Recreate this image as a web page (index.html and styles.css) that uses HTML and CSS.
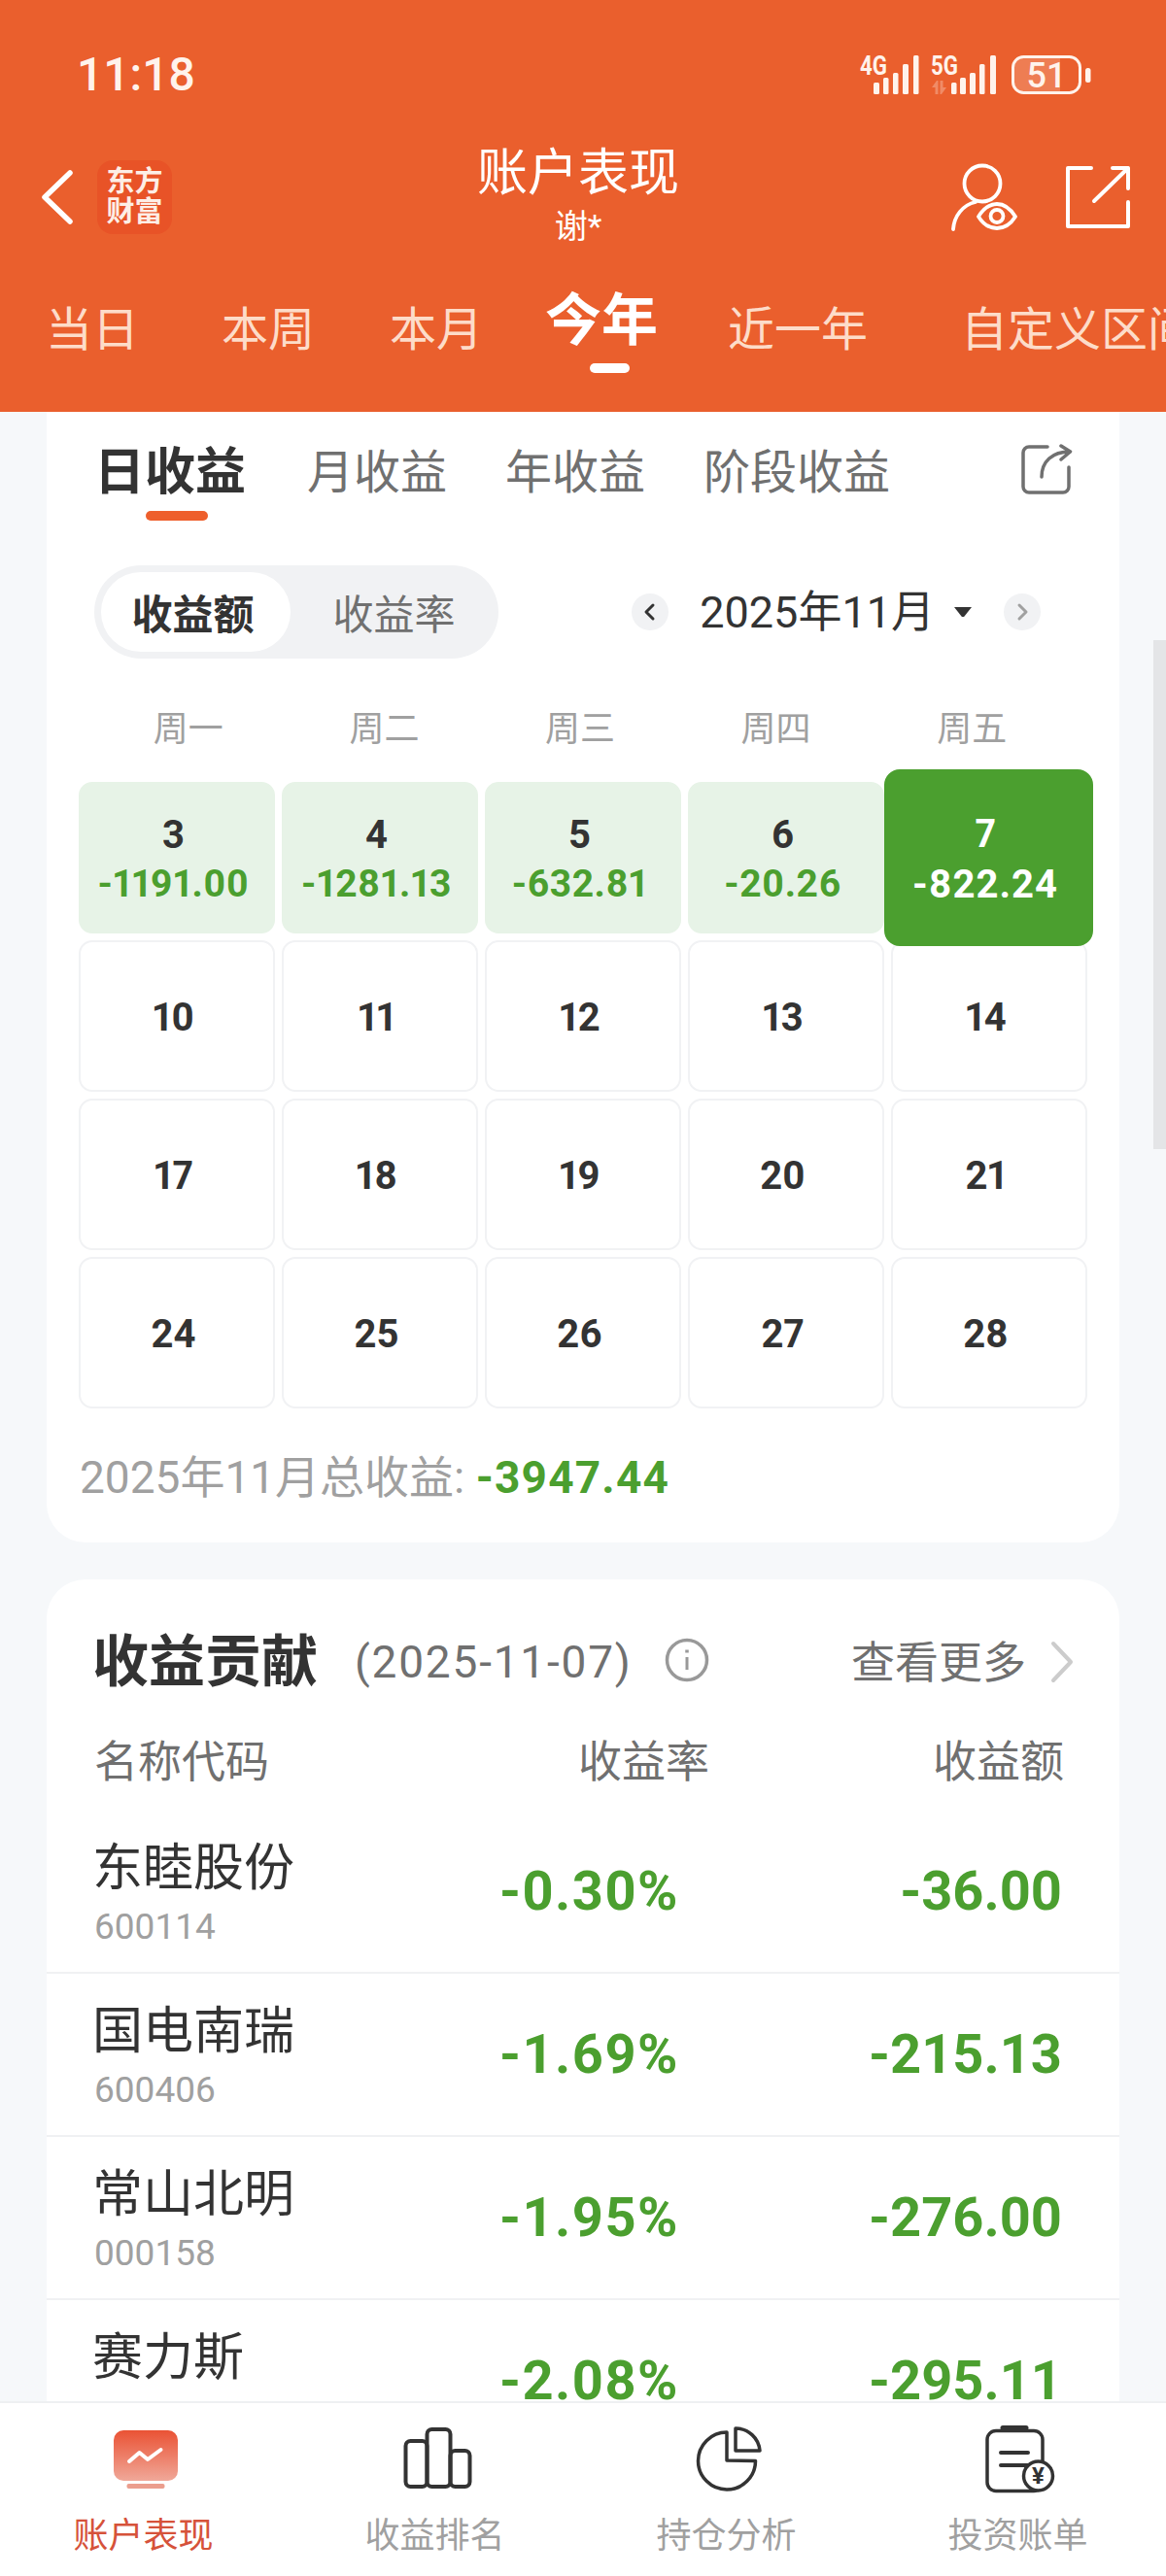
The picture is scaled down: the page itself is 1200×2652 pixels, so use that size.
FILE: index.html
```html
<!DOCTYPE html>
<html lang="zh-CN">
<head>
<meta charset="utf-8">
<title>账户表现</title>
<link rel="stylesheet" href="styles.css">
</head>
<body>
<div class="page">
  <header class="header">
    <div class="status">
      <span class="time">11:18</span>
      <svg class="status-icons" width="240" height="60" viewBox="885 45 240 60">
        <g fill="#fff3ec">
          <text class="net" x="885" y="77" textLength="28" lengthAdjust="spacingAndGlyphs">4G</text>
          <rect x="899" y="85" width="6" height="12" rx="1.5"/>
          <rect x="909" y="80" width="5.5" height="17" rx="1.5"/>
          <rect x="919" y="75" width="5.5" height="22" rx="1.5"/>
          <rect x="929" y="66" width="6" height="31" rx="1.5"/>
          <rect x="940" y="57" width="5.5" height="40" rx="1.5"/>
          <text class="net" x="958" y="77" textLength="28" lengthAdjust="spacingAndGlyphs">5G</text>
          <path d="M964 83l-5 7h3.500v7h3V83zM969 97l5-7h-3.500v-7h-3v14z" opacity=".3"/>
          <rect x="979" y="85" width="5.5" height="12" rx="1.5"/>
          <rect x="988" y="80" width="6" height="17" rx="1.5"/>
          <rect x="998" y="75" width="6" height="22" rx="1.5"/>
          <rect x="1008" y="66" width="5.5" height="31" rx="1.5"/>
          <rect x="1019" y="57" width="6" height="40" rx="1.5"/>
          <path d="M1043 70a11 11 0 0 1 11-11h37v36h-37a11 11 0 0 1-11-11z" opacity=".2"/>
          <rect x="1042.5" y="58.5" width="69" height="37" rx="11" fill="none" stroke="#fff3ec" stroke-width="3"/>
          <text class="batt" x="1077" y="90" text-anchor="middle">51</text>
          <rect x="1117" y="70" width="5.5" height="15" rx="2.5"/>
        </g>
      </svg>
    </div>
    <div class="titlebar">
      <div class="title-left">
        <svg class="back" width="38" height="60" viewBox="40 173 38 60" fill="none" stroke="#fff" stroke-width="5.5" stroke-linecap="round" stroke-linejoin="round">
          <path d="M72 178L46 203l26 25"/>
        </svg>
        <div class="logo">东方<br>财富</div>
      </div>
      <div class="title-center">
        <div class="title">账户表现</div>
        <div class="subtitle">谢*</div>
      </div>
      <div class="title-right">
        <svg width="70" height="70" viewBox="979 167 70 70" fill="none" stroke="#fff" stroke-width="3.8" stroke-linecap="round" stroke-linejoin="round">
          <circle cx="1011" cy="188" r="18.5"/>
          <path d="M981 235c1-14 10-25 23-28"/>
          <path d="M1007 222c5-8 12-13 19-13s14 5 19 13c-5 8-12 12-19 12s-14-4-19-12z"/>
          <circle cx="1026" cy="221.5" r="6.5"/>
        </svg>
        <svg width="69" height="68" viewBox="1096 168 69 68" fill="none" stroke="#fff" stroke-width="4" stroke-linecap="round" stroke-linejoin="round">
          <path d="M1123 172h-24v60h62v-25"/>
          <path d="M1126 206l35-34M1145 172h16v21"/>
        </svg>
      </div>
    </div>
    <nav class="ranges">
      <span class="range">当日</span>
      <span class="range">本周</span>
      <span class="range">本月</span>
      <span class="range range-active">今年<i class="range-bar"></i></span>
      <span class="range">近一年</span>
      <span class="range">自定义区间</span>
    </nav>
  </header>

  <main class="content">
    <section class="card card-cal">
      <div class="kinds">
        <span class="kind kind-active">日收益<i class="kind-bar"></i></span>
        <span class="kind">月收益</span>
        <span class="kind">年收益</span>
        <span class="kind">阶段收益</span>
        <svg class="kind-share" width="54" height="54" viewBox="1050 457 54 54" fill="none" stroke="#707070" stroke-width="3.5" stroke-linecap="round" stroke-linejoin="round">
          <path d="M1078 460h-19a6 6 0 0 0-6 6v35a6 6 0 0 0 6 6h35a6 6 0 0 0 6-6v-20"/>
          <path d="M1072 491c0-16 11-26 29-26M1092 459l9.500 6-9.500 8"/>
        </svg>
      </div>
      <div class="toolbar">
        <div class="segment">
          <span class="seg seg-active">收益额</span>
          <span class="seg">收益率</span>
        </div>
        <div class="month">
          <svg width="38" height="38" viewBox="0 0 38 38"><circle cx="19" cy="19" r="19" fill="#f1f2f4"/><path d="M22 12l-7 7 7 7" fill="none" stroke="#333" stroke-width="3" stroke-linecap="round" stroke-linejoin="round"/></svg>
          <span class="month-label">2025年11月</span>
          <svg class="caret" width="18" height="10" viewBox="0 0 18 10"><path d="M0 0h18l-7.500 9.500a2 2 0 0 1-3 0z" fill="#333"/></svg>
          <svg class="month-next" width="38" height="38" viewBox="0 0 38 38"><circle cx="19" cy="19" r="19" fill="#f1f2f4"/><path d="M16 12l7 7-7 7" fill="none" stroke="#a0a0a0" stroke-width="3" stroke-linecap="round" stroke-linejoin="round"/></svg>
        </div>
      </div>
      <div class="weekdays">
        <span>周一</span><span>周二</span><span>周三</span><span>周四</span><span>周五</span>
      </div>
      <div class="calendar">
        <div class="day day-loss"><b class="num">3</b><span class="amt">-1191.00</span></div>
        <div class="day day-loss"><b class="num">4</b><span class="amt">-1281.13</span></div>
        <div class="day day-loss"><b class="num">5</b><span class="amt">-632.81</span></div>
        <div class="day day-loss"><b class="num">6</b><span class="amt">-20.26</span></div>
        <div class="day day-selected"><b class="num">7</b><span class="amt">-822.24</span></div>
        <div class="day"><b class="num">10</b></div>
        <div class="day"><b class="num">11</b></div>
        <div class="day"><b class="num">12</b></div>
        <div class="day"><b class="num">13</b></div>
        <div class="day"><b class="num">14</b></div>
        <div class="day"><b class="num">17</b></div>
        <div class="day"><b class="num">18</b></div>
        <div class="day"><b class="num">19</b></div>
        <div class="day"><b class="num">20</b></div>
        <div class="day"><b class="num">21</b></div>
        <div class="day"><b class="num">24</b></div>
        <div class="day"><b class="num">25</b></div>
        <div class="day"><b class="num">26</b></div>
        <div class="day"><b class="num">27</b></div>
        <div class="day"><b class="num">28</b></div>
      </div>
      <div class="total">2025年11月总收益: <b class="total-value">-3947.44</b></div>
    </section>

    <section class="card card-contrib">
      <div class="contrib-head">
        <h2 class="contrib-title">收益贡献</h2>
        <span class="contrib-date">(2025-11-07)</span>
        <svg class="info" width="46" height="46" viewBox="0 0 46 46" fill="none" stroke="#999" stroke-width="3.500">
          <circle cx="23" cy="23" r="20.500"/>
          <path d="M23 20v13" stroke-width="3"/>
          <path d="M23 12.500v3" stroke-width="3.500"/>
        </svg>
        <span class="more">查看更多</span>
        <svg class="more-arrow" width="26" height="46" viewBox="0 0 26 46" fill="none" stroke="#ccc" stroke-width="4" stroke-linecap="round" stroke-linejoin="round">
          <path d="M4 4l18 19L4 42"/>
        </svg>
      </div>
      <div class="cols">
        <span>名称代码</span><span class="col-r">收益率</span><span class="col-r">收益额</span>
      </div>
      <div class="row">
        <div class="stock"><div class="stock-name">东睦股份</div><div class="stock-code">600114</div></div>
        <div class="rate">-0.30%</div><div class="profit">-36.00</div>
      </div>
      <div class="row">
        <div class="stock"><div class="stock-name">国电南瑞</div><div class="stock-code">600406</div></div>
        <div class="rate">-1.69%</div><div class="profit">-215.13</div>
      </div>
      <div class="row">
        <div class="stock"><div class="stock-name">常山北明</div><div class="stock-code">000158</div></div>
        <div class="rate">-1.95%</div><div class="profit">-276.00</div>
      </div>
      <div class="row row-cut">
        <div class="stock"><div class="stock-name">赛力斯</div></div>
        <div class="rate">-2.08%</div><div class="profit">-295.11</div>
      </div>
    </section>
  </main>

  <div class="scrollbar"></div>

  <footer class="tabbar">
    <div class="tab tab-active">
      <svg width="72" height="72" viewBox="0 0 72 72">
        <defs><linearGradient id="tabGrad" x1="0" y1="0" x2="0" y2="1"><stop offset="0" stop-color="#ea5234"/><stop offset="1" stop-color="#f0a899"/></linearGradient></defs>
        <rect x="3" y="6" width="66" height="52" rx="10" fill="url(#tabGrad)"/>
        <rect x="16.500" y="61" width="39" height="5" rx="2" fill="#eb9e8e"/>
        <path d="M19 38l10.500-9 8.500 7 13.500-10" fill="none" stroke="#fff" stroke-width="4" stroke-linecap="round" stroke-linejoin="round"/>
      </svg>
      <span class="tab-label">账户表现</span>
    </div>
    <div class="tab">
      <svg width="72" height="72" viewBox="0 0 72 72" fill="none" stroke="#333" stroke-width="4" stroke-linejoin="round">
        <rect x="3.500" y="17" width="22" height="47" rx="5"/>
        <rect x="25.500" y="5" width="24" height="59" rx="5"/>
        <rect x="49.500" y="27" width="20" height="37" rx="5"/>
      </svg>
      <span class="tab-label">收益排名</span>
    </div>
    <div class="tab">
      <svg width="72" height="72" viewBox="0 0 72 72" fill="none" stroke="#333" stroke-width="3.500" stroke-linejoin="round">
        <path d="M34 37V8a29.500 29.500 0 1 0 29.500 29.500z"/>
        <path d="M43 4v23h25A25 25 0 0 0 43 4z"/>
      </svg>
      <span class="tab-label">持仓分析</span>
    </div>
    <div class="tab">
      <svg width="74" height="72" viewBox="0 0 74 72" fill="none" stroke="#333" stroke-width="3.500" stroke-linecap="round">
        <rect x="3" y="6.500" width="57" height="62" rx="9"/>
        <path d="M19 3.500h24" stroke-width="5"/>
        <path d="M17 29h28M17 42h28" stroke-width="4"/>
        <circle cx="55.500" cy="53" r="15" fill="#fff"/>
        <text class="yen" x="55.500" y="61" text-anchor="middle">¥</text>
      </svg>
      <span class="tab-label">投资账单</span>
    </div>
  </footer>
</div>
</body>
</html>
```

FILE: styles.css
```css
* { box-sizing: border-box; }
html, body { margin: 0; padding: 0; }
body {
  font-family: Roboto, "Noto Sans CJK SC", sans-serif;
  color: #333;
}
.page {
  position: relative;
  width: 1200px;
  height: 2652px;
  display: flex;
  flex-direction: column;
  overflow: hidden;
  background: #f6f8fa;
}

/* header */
.header {
  flex: none;
  height: 424px;
  background: #ea5f2d;
  color: #fff;
  overflow: hidden;
}
.status {
  height: 148px;
  display: flex;
  align-items: flex-start;
  padding: 45px 75px 0 79px;
}
.time {
  margin-top: 4px;
  font-size: 48px;
  line-height: 56px;
  font-weight: 500;
  color: #fff3ec;
}
.status-icons { margin-left: auto; }
.net { font-size: 27px; font-weight: 700; font-family: Roboto, sans-serif; }
.batt { font-size: 36px; font-weight: 500; font-family: Roboto, sans-serif; }

.titlebar {
  height: 110px;
  display: grid;
  grid-template-columns: 491px 208px 1fr;
  align-items: center;
}
.title-left {
  display: flex;
  align-items: center;
  padding-left: 40px;
}
.logo {
  width: 77px;
  height: 76px;
  margin-left: 22px;
  border-radius: 16px;
  background: #e85327;
  font-size: 29px;
  line-height: 31px;
  font-weight: 700;
  text-align: center;
  padding-top: 7px;
  color: #fdeee6;
}
.title-center { text-align: center; }
.title { font-size: 52px; line-height: 60px; }
.subtitle { font-size: 34px; line-height: 49px; }
.title-right {
  display: flex;
  justify-content: flex-end;
  align-items: center;
  gap: 47px;
  padding-right: 35px;
}

.ranges {
  display: flex;
  align-items: flex-start;
  padding: 52px 0 0 47px;
  white-space: nowrap;
}
.range {
  flex: none;
  font-size: 48px;
  line-height: 60px;
  color: #fddcc9;
}
.range:nth-child(2) { margin-left: 85px; }
.range:nth-child(3) { margin-left: 77px; }
.range:nth-child(4) { margin-left: 64px; }
.range:nth-child(5) { margin-left: 72px; }
.range:nth-child(6) { margin-left: 96px; }
.range-active {
  display: flex;
  flex-direction: column;
  align-items: center;
  margin-top: -10px;
  font-size: 58px;
  font-weight: 700;
  color: #fff;
}
.range-bar {
  width: 41px;
  height: 10px;
  margin: 14px 0 0 16px;
  border-radius: 5px;
  background: #fff;
}

/* content */
.content {
  flex: 1;
  min-height: 0;
  overflow: hidden;
  padding: 0 48px;
}
.card { background: #fff; }
.card-cal { border-radius: 0 0 40px 40px; height: 1164px; }
.card-contrib { margin-top: 38px; border-radius: 40px 40px 0 0; }

.kinds {
  height: 112px;
  display: flex;
  align-items: flex-start;
  padding: 31px 48px 0 49px;
}
.kind {
  display: flex;
  flex-direction: column;
  align-items: center;
  margin-left: 60px;
  font-size: 48px;
  line-height: 64px;
  color: #707070;
}
.kind-active {
  margin-left: 0;
  margin-right: 3px;
  font-size: 52px;
  font-weight: 700;
  color: #333;
}
.kind-bar {
  width: 64px;
  height: 10px;
  margin: 7px 0 0 14px;
  border-radius: 5px;
  background: #ee5f2c;
}
.kind-share { margin: 2px 0 0 auto; }

.toolbar {
  display: flex;
  align-items: center;
  margin-top: 46px;
  padding: 0 81px 0 49px;
}
.segment {
  width: 416px;
  height: 96px;
  padding: 7px;
  display: grid;
  grid-template-columns: 195px 1fr;
  border-radius: 48px;
  background: #f1f2f4;
}
.seg {
  display: flex;
  align-items: center;
  justify-content: center;
  padding: 0 0 2px 6px;
  font-size: 42px;
  color: #707070;
  border-radius: 42px;
}
.seg-active {
  padding: 0 6px 2px 0;
  background: #fff;
  font-weight: 700;
  color: #333;
}
.month {
  margin-left: auto;
  display: flex;
  align-items: center;
}
.month-label {
  margin: 2px 0 0 32px;
  font-size: 45px;
  line-height: 60px;
  color: #333;
}
.caret { margin-left: 20px; }
.month-next { margin-left: 33px; }

.weekdays {
  display: grid;
  grid-template-columns: repeat(5, 1fr);
  margin-top: 48px;
  padding: 0 51px 0 45px;
  font-size: 36px;
  line-height: 50px;
  text-align: center;
  color: #a0a0a0;
}
.calendar {
  display: grid;
  grid-template-columns: repeat(5, 202px);
  grid-auto-rows: 156px;
  gap: 7px;
  margin: 29px 0 0 33px;
}
.day {
  display: flex;
  flex-direction: column;
  align-items: center;
  justify-content: center;
  padding: 3px 7px 0 0;
  border: 2px solid #f1f2f4;
  border-radius: 14px;
  background: #fff;
}
.num {
  font-size: 40px;
  line-height: 46px;
  font-weight: 700;
  color: #333;
  font-variant-numeric: proportional-nums;
}
.amt {
  margin-top: 4px;
  font-size: 39px;
  line-height: 46px;
  font-weight: 700;
  letter-spacing: 0.5px;
  color: #4b9f2f;
  font-variant-numeric: proportional-nums;
}
.day-loss {
  border-color: #e7f3e7;
  background: #e7f3e7;
  padding-top: 4px;
}
.day-selected {
  position: relative;
  z-index: 1;
  margin: -13px -6px -13px -7px;
  border-color: #4b9f2f;
  background: #4b9f2f;
  border-radius: 16px;
}
.day-selected .num { color: #fff; }
.day-selected .amt { color: #fff; font-size: 40px; margin-top: 6px; letter-spacing: 1px; }

.total {
  margin-top: 41px;
  padding-left: 34px;
  font-size: 46px;
  line-height: 60px;
  color: #a0a0a0;
}
.total-value {
  font-size: 46px;
  letter-spacing: 1.2px;
  color: #4b9f2f;
}

.contrib-head {
  display: flex;
  align-items: center;
  height: 80px;
  padding: 0 46px 0 47px;
  position: relative;
  top: 45px;
}
.contrib-title {
  margin: 0;
  font-size: 58px;
  line-height: 80px;
  font-weight: 700;
  color: #333;
}
.contrib-date {
  margin-left: 38px;
  font-size: 46px;
  letter-spacing: 1.8px;
  color: #707070;
}
.info { margin: 0 0 5px 33px; }
.more {
  margin: 0 0 6px auto;
  font-size: 45px;
  color: #707070;
}
.more-arrow { margin-left: 24px; }

.cols {
  display: grid;
  grid-template-columns: 1fr 200px 365px;
  margin-top: 79px;
  padding: 0 57px 0 49px;
  font-size: 45px;
  line-height: 60px;
  color: #707070;
}
.col-r { text-align: right; }
.row {
  display: grid;
  grid-template-columns: 1fr 200px 394px;
  align-items: center;
  height: 168px;
  padding: 0 59px 0 47px;
  border-bottom: 2px solid #f0f1f3;
}
.cols + .row { margin-top: 19px; }
.stock { padding-top: 6px; }
.row-cut .stock { padding-bottom: 52px; }
.stock-name {
  font-size: 52px;
  line-height: 64px;
  color: #333;
}
.stock-code {
  margin-top: 4px;
  padding-left: 2px;
  font-size: 37px;
  line-height: 48px;
  color: #a0a0a0;
}
.rate, .profit {
  font-size: 56px;
  font-weight: 700;
  text-align: right;
  color: #4b9f2f;
}
.rate { letter-spacing: 1.5px; white-space: nowrap; }

.scrollbar {
  position: absolute;
  right: 0;
  top: 659px;
  width: 13px;
  height: 524px;
  background: #e4e5e7;
}

/* tab bar */
.tabbar {
  flex: none;
  position: relative;
  z-index: 2;
  height: 180px;
  display: grid;
  grid-template-columns: repeat(4, 300px);
  border-top: 2px solid #eef0f2;
  background: #fff;
}
.tab {
  display: flex;
  flex-direction: column;
  align-items: center;
  padding-top: 22px;
}
.tab-label {
  margin: 18px 5px 0 0;
  font-size: 36px;
  line-height: 50px;
  color: #a0a0a0;
}
.tab-active .tab-label { color: #d6523a; }
.yen {
  font-size: 24px;
  font-weight: 700;
  fill: #333;
  stroke: none;
  font-family: Roboto, sans-serif;
}
```
